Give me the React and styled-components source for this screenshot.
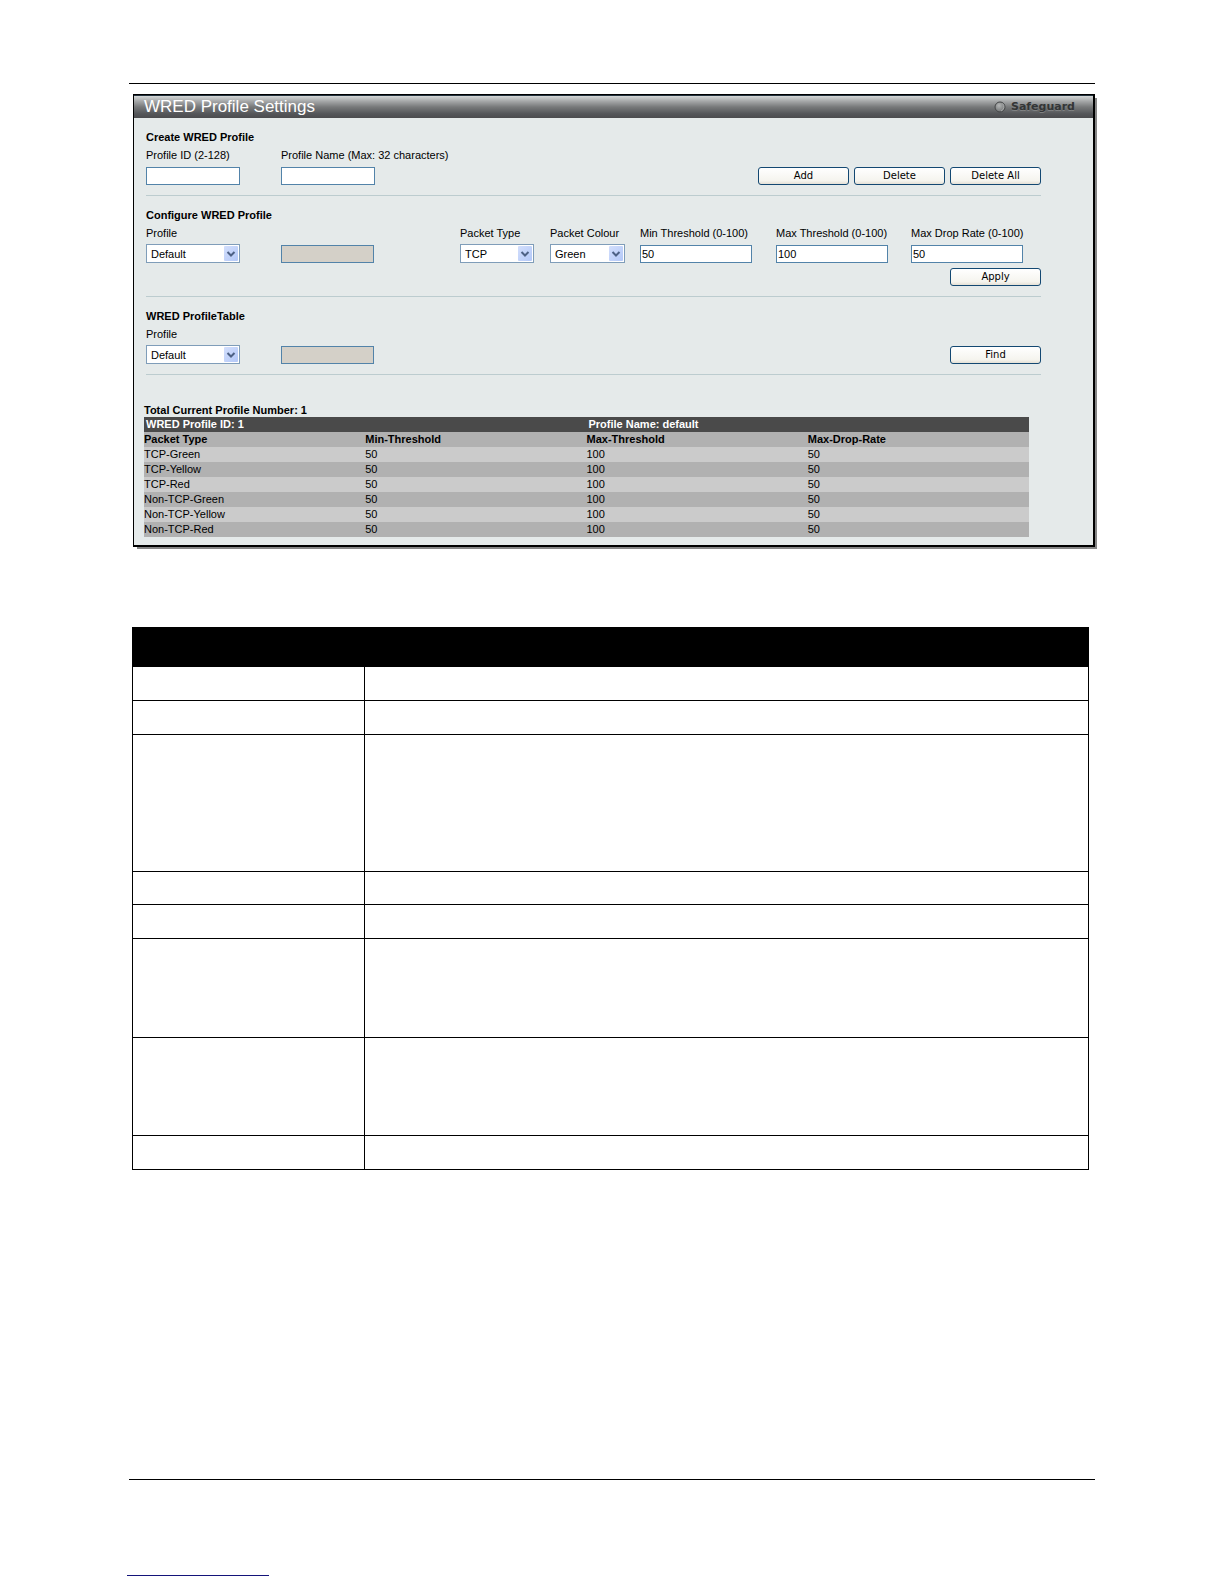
import React, { useState } from "react";
import styled, { createGlobalStyle } from "styled-components";

const packetRows = [
  "TCP-Green",
  "TCP-Yellow",
  "TCP-Red",
  "Non-TCP-Green",
  "Non-TCP-Yellow",
  "Non-TCP-Red",
];

const docRows = [34, 34, 137, 33, 34, 99, 98, 34];

const Select = ({ id, width, options }) => (
  <SelectWrap $width={width}>
    <select id={id}>
      {options.map((option) => (
        <option key={option}>{option}</option>
      ))}
    </select>
    <Arrow viewBox="0 0 14 15" aria-hidden="true">
      <defs>
        <linearGradient id={`${id}-arrow`} x1="0" y1="0" x2="1" y2="1">
          <stop offset="0" stopColor="#d3dffc" />
          <stop offset="1" stopColor="#b3c8f8" />
        </linearGradient>
      </defs>
      <rect width="14" height="15" rx="1" fill={`url(#${id}-arrow)`} />
      <path d="M3.5 6 L7 9.5 L10.5 6" fill="none" stroke="#4d6185" strokeWidth="2" />
    </Arrow>
  </SelectWrap>
);

const TextField = ({ id, label, width, value: initial = "" }) => {
  const [value, setValue] = useState(initial);
  return (
    <Field>
      <label htmlFor={id}>{label}</label>
      <ControlBox>
        <Input
          id={id}
          type="text"
          $width={width}
          value={value}
          onChange={(e) => setValue(e.target.value)}
        />
      </ControlBox>
    </Field>
  );
};

const SelectField = ({ id, label, width, options }) => (
  <Field>
    <label htmlFor={id}>{label}</label>
    <ControlBox>
      <Select id={id} width={width} options={options} />
    </ControlBox>
  </Field>
);

const DisabledField = () => (
  <Field>
    <ControlBox>
      <Input type="text" $width={93} aria-label="Profile Name" disabled />
    </ControlBox>
  </Field>
);

const App = () => {
  return (
    <Page>
      <GlobalStyle />
      <Rule />
      <Panel>
        <Header>
          <h1>WRED Profile Settings</h1>
          <Safeguard>
            <svg width="12" height="12" viewBox="0 0 12 12" aria-hidden="true">
              <defs>
                <radialGradient id="led" cx="0.4" cy="0.35" r="0.7">
                  <stop offset="0" stopColor="#b4b6b6" />
                  <stop offset="1" stopColor="#6d7071" />
                </radialGradient>
              </defs>
              <circle cx="6" cy="6" r="5" fill="url(#led)" stroke="#444647" />
              <path d="M8.5 2.5 A4.5 4.5 0 0 1 7 10" fill="none" stroke="#a9abab" />
            </svg>
            <span>Safeguard</span>
          </Safeguard>
        </Header>

        <Section onSubmit={(e) => e.preventDefault()}>
          <h2>Create WRED Profile</h2>
          <Fields>
            <TextField id="profile-id" label="Profile ID (2-128)" width={94} />
            <TextField
              id="profile-name"
              label="Profile Name (Max: 32 characters)"
              width={94}
            />
            <Buttons>
              <Button type="button">Add</Button>
              <Button type="button">Delete</Button>
              <Button type="button">Delete All</Button>
            </Buttons>
          </Fields>
        </Section>

        <Section onSubmit={(e) => e.preventDefault()}>
          <h2>Configure WRED Profile</h2>
          <Fields>
            <SelectField id="profile" label="Profile" width={94} options={["Default"]} />
            <DisabledField />
            <SelectField
              id="packet-type"
              label="Packet Type"
              width={74}
              options={["TCP", "Non-TCP"]}
            />
            <SelectField
              id="packet-colour"
              label="Packet Colour"
              width={75}
              options={["Green", "Yellow", "Red"]}
            />
            <TextField id="min" label="Min Threshold (0-100)" width={112} value="50" />
            <TextField id="max" label="Max Threshold (0-100)" width={112} value="100" />
            <TextField id="drop" label="Max Drop Rate (0-100)" width={112} value="50" />
          </Fields>
          <ApplyRow>
            <Button type="submit">Apply</Button>
          </ApplyRow>
        </Section>

        <Section onSubmit={(e) => e.preventDefault()}>
          <h2>WRED ProfileTable</h2>
          <Fields>
            <SelectField id="find-profile" label="Profile" width={94} options={["Default"]} />
            <DisabledField />
            <Buttons>
              <Button type="submit">Find</Button>
            </Buttons>
          </Fields>
        </Section>

        <Results>
          <p>Total Current Profile Number: 1</p>
          <ProfileTable>
            <thead>
              <TitleRow>
                <th colSpan={2}>WRED Profile ID: 1</th>
                <th colSpan={2}>Profile Name: default</th>
              </TitleRow>
              <tr>
                <th>Packet Type</th>
                <th>Min-Threshold</th>
                <th>Max-Threshold</th>
                <th>Max-Drop-Rate</th>
              </tr>
            </thead>
            <tbody>
              {packetRows.map((type) => (
                <tr key={type}>
                  <td>{type}</td>
                  <td>50</td>
                  <td>100</td>
                  <td>50</td>
                </tr>
              ))}
            </tbody>
          </ProfileTable>
        </Results>
      </Panel>

      <DocTable>
        <thead>
          <DocRow $height={39}>
            <th />
            <th />
          </DocRow>
        </thead>
        <tbody>
          {docRows.map((height, i) => (
            <DocRow key={i} $height={height}>
              <td />
              <td />
            </DocRow>
          ))}
        </tbody>
      </DocTable>

      <Spacer />
      <Rule />
      <FooterLine />
    </Page>
  );
};

const GlobalStyle = createGlobalStyle`
  * {
    box-sizing: border-box;
  }

  body {
    margin: 0;
    background: #fff;
    color: #000;
    font-family: "Liberation Sans", Arial, sans-serif;
    font-size: 11px;
  }

  h1, h2, p {
    margin: 0;
  }
`;

const Page = styled.main`
  min-height: 100vh;
  padding: 83px 127px 8px;
  display: flex;
  flex-direction: column;
`;

const Rule = styled.div`
  height: 1px;
  margin: 0 2px;
  flex: none;
  background: #000;
`;

const Panel = styled.section`
  margin: 10px 2px 0 6px;
  padding-bottom: 8px;
  background: #e5eaea;
  border: solid #000;
  border-width: 1px 2px 2px 1px;
  box-shadow: 3px 3px 0 -1px #868686;
`;

const Header = styled.header`
  height: 23px;
  padding: 0 18px 0 10px;
  display: flex;
  align-items: center;
  justify-content: space-between;
  border-top: 1px solid #22313c;
  background: linear-gradient(#d4d7d7 0%, #a3a5a6 25%, #77797a 50%, #55575a 80%, #4b4c4e 100%);

  h1 {
    color: #fff;
    font-size: 17px;
    font-weight: 400;
    line-height: 20px;
  }
`;

const Safeguard = styled.div`
  display: flex;
  align-items: center;
  gap: 5px;
  color: #333536;
  font-family: "DejaVu Sans", Verdana, sans-serif;
  font-size: 11px;
  font-weight: 700;
  line-height: 12px;
  text-shadow: 0 1px 0 #808283;
`;

const Section = styled.form`
  margin: 0 52px 0 12px;
  padding: 10px 0;
  border-bottom: 1px solid #bccccf;

  h2 {
    font-size: 11px;
    line-height: 18px;
  }
`;

const Fields = styled.div`
  display: grid;
  grid-template-columns: 135fr 179fr 90fr 90fr 136fr 135fr 130fr;
  align-items: end;
`;

const Field = styled.div`
  min-width: 0;
  display: flex;
  flex-direction: column;
  gap: 2px;

  label {
    line-height: 18px;
    white-space: nowrap;
  }
`;

const ControlBox = styled.div`
  height: 19px;
  display: flex;
  align-items: center;
`;

const Input = styled.input`
  width: ${(props) => props.$width}px;
  height: 18px;
  padding: 0 1px;
  border: 1px solid #5283a9;
  border-radius: 0;
  background: #fff;
  color: #000;
  font-family: inherit;
  font-size: 11px;

  &:disabled {
    background: #d4d0c8;
  }
`;

const SelectWrap = styled.div`
  position: relative;
  width: ${(props) => props.$width}px;
  height: 19px;

  select {
    width: 100%;
    height: 100%;
    padding: 0 18px 0 4px;
    appearance: none;
    border: 1px solid #7f9db9;
    border-radius: 0;
    background: #fff;
    color: #000;
    font-family: inherit;
    font-size: 11px;
  }
`;

const Arrow = styled.svg`
  position: absolute;
  top: 2px;
  right: 2px;
  width: 14px;
  height: 15px;
  pointer-events: none;
`;

const Buttons = styled.div`
  grid-column: 3 / -1;
  height: 19px;
  display: flex;
  align-items: center;
  justify-content: flex-end;
  gap: 5px;
`;

const ApplyRow = styled.div`
  margin-top: 5px;
  display: flex;
  justify-content: flex-end;
`;

const Button = styled.button`
  width: 91px;
  height: 18px;
  padding: 0;
  border: 1px solid #134872;
  border-radius: 3px;
  background: linear-gradient(#fff, #f5f4ee 80%, #e4e0d6);
  color: #000;
  font-family: "DejaVu Sans", Verdana, sans-serif;
  font-size: 10px;
  line-height: 14px;
  cursor: pointer;
`;

const Results = styled.div`
  margin: 28px 64px 0 10px;

  p {
    font-weight: 700;
    line-height: 14px;
  }
`;

const ProfileTable = styled.table`
  width: 100%;
  table-layout: fixed;
  border-collapse: collapse;
  line-height: 15px;

  th,
  td {
    padding: 0;
    text-align: left;
  }

  tr {
    background: #b1b1b1;
  }

  tbody tr:nth-child(odd) {
    background: #cbcbcb;
  }
`;

const TitleRow = styled.tr`
  && {
    background: #4a4a4a;
    color: #fff;
  }

  && th {
    padding-left: 2px;
  }
`;

const DocTable = styled.table`
  margin: 80px 8px 0 5px;
  table-layout: fixed;
  border-collapse: collapse;

  th,
  td {
    padding: 0;
    border: 1px solid #000;
  }

  th {
    background: #000;
  }

  th:first-child {
    width: 232px;
  }
`;

const DocRow = styled.tr`
  height: ${(props) => props.$height}px;
`;

const Spacer = styled.div`
  flex: 1;
`;

const FooterLine = styled.div`
  width: 142px;
  height: 1px;
  margin-top: 95px;
  flex: none;
  background: #14147a;
`;

export default App;
